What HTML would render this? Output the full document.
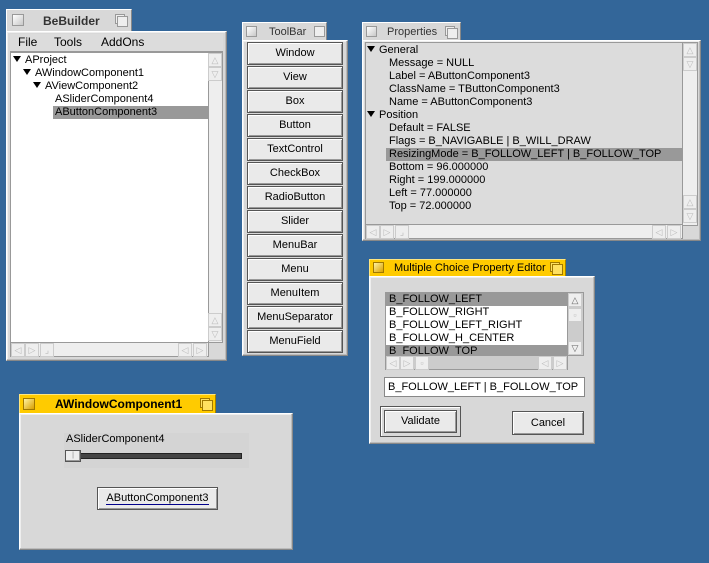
<!DOCTYPE html>
<html><head><meta charset="utf-8"><style>
*{box-sizing:border-box;margin:0;padding:0}
body{width:709px;height:563px;background:#336699;position:relative;overflow:hidden;font-family:"Liberation Sans",sans-serif;font-size:11px;color:#000}
.a{position:absolute}
.tab{position:absolute;background:#d8d8d8;border:1px solid #fff;border-right-color:#888;border-bottom:none;font-size:11px}
.tab.y{background:#ffcb00;border-color:#ffe680 #a08000 #a08000 #ffe680}
.cb{position:absolute;width:12px;height:12px;border:1px solid #999;background:linear-gradient(135deg,#fff,#c8c8c8)}
.y .cb{background:linear-gradient(135deg,#fff2a0,#d9a000);border-color:#a07800}
.zb{position:absolute;width:13px;height:13px}
.zb:before{content:"";position:absolute;left:0;top:0;width:8px;height:8px;border:1px solid #999;background:#eee}
.zb:after{content:"";position:absolute;right:0;bottom:0;width:9px;height:9px;border:1px solid #999;background:#eee}
.y .zb:before,.y .zb:after{border-color:#a07800;background:#ffe060}
.frame{position:absolute;background:#d8d8d8;border:1px solid #fff;border-right-color:#888;border-bottom-color:#888;box-shadow:inset -1px -1px 0 #bbb,inset 1px 1px 0 #eee}
.list{position:absolute;background:#fff;border:1px solid #999}
.row{position:absolute;height:13px;line-height:13px;white-space:nowrap}
.sel{background:#999}
.sb{position:absolute;background:#eee;border:1px solid #999}
.arr{position:absolute;width:14px;height:14px;border:1px solid #ccc;color:#bbb;font-size:9px;text-align:center;line-height:12px;background:#eee}
.btn{position:absolute;background:#eaeaea;border:1px solid #555;box-shadow:inset 1px 1px 0 #fff,inset -1px -1px 0 #999;text-align:center;line-height:20px;font-size:11px}
.tri{display:inline-block;width:0;height:0;border-left:4px solid transparent;border-right:4px solid transparent;border-top:6px solid #000;margin-right:4px;vertical-align:1px}
</style></head><body>

<!-- BeBuilder -->
<div class="tab" style="left:6px;top:9px;width:126px;height:23px">
 <div class="cb" style="left:5px;top:4px"></div>
 <div class="a" style="left:36px;top:4px;font-weight:bold;font-size:12px;color:#333">BeBuilder</div>
 <div class="zb" style="left:108px;top:4px"></div>
</div>
<div class="frame" style="left:6px;top:31px;width:221px;height:330px"></div>
<div class="a" style="left:10px;top:34px;width:213px;height:18px;background:#dcdcdc;border-bottom:1px solid #999;font-size:12px;line-height:17px">
 <span class="a" style="left:8px">File</span><span class="a" style="left:44px">Tools</span><span class="a" style="left:91px">AddOns</span></div>
<div class="list" style="left:10px;top:52px;width:213px;height:291px">
 <div class="row" style="left:2px;top:1px"><span class="tri"></span>AProject</div>
 <div class="row" style="left:12px;top:14px"><span class="tri"></span>AWindowComponent1</div>
 <div class="row" style="left:22px;top:27px"><span class="tri"></span>AViewComponent2</div>
 <div class="row" style="left:44px;top:40px">ASliderComponent4</div>
 <div class="row sel" style="left:42px;top:53px;width:156px;padding-left:2px">AButtonComponent3</div>
</div>
<div class="sb" style="left:208px;top:52px;width:15px;height:291px"></div>
<div class="arr" style="left:208px;top:53px">△</div><div class="arr" style="left:208px;top:67px">▽</div>
<div class="arr" style="left:208px;top:313px">△</div><div class="arr" style="left:208px;top:327px">▽</div>
<div class="sb" style="left:10px;top:342px;width:199px;height:15px"></div>
<div class="arr" style="left:11px;top:343px">◁</div><div class="arr" style="left:25px;top:343px">▷</div><div class="arr" style="left:40px;top:343px">⌟</div>
<div class="arr" style="left:178px;top:343px">◁</div><div class="arr" style="left:193px;top:343px">▷</div>

<!-- ToolBar -->
<div class="tab" style="left:242px;top:22px;width:85px;height:19px">
 <div class="cb" style="left:3px;top:3px;width:11px;height:11px"></div>
 <div class="a" style="left:26px;top:3px;color:#333">ToolBar</div>
 <div class="zb" style="left:71px;top:3px;width:11px;height:11px"></div>
</div>
<div class="frame" style="left:242px;top:40px;width:106px;height:316px"></div>
<div class="btn" style="left:247px;top:42px;width:96px;height:23px">Window</div>
<div class="btn" style="left:247px;top:66px;width:96px;height:23px">View</div>
<div class="btn" style="left:247px;top:90px;width:96px;height:23px">Box</div>
<div class="btn" style="left:247px;top:114px;width:96px;height:23px">Button</div>
<div class="btn" style="left:247px;top:138px;width:96px;height:23px">TextControl</div>
<div class="btn" style="left:247px;top:162px;width:96px;height:23px">CheckBox</div>
<div class="btn" style="left:247px;top:186px;width:96px;height:23px">RadioButton</div>
<div class="btn" style="left:247px;top:210px;width:96px;height:23px">Slider</div>
<div class="btn" style="left:247px;top:234px;width:96px;height:23px">MenuBar</div>
<div class="btn" style="left:247px;top:258px;width:96px;height:23px">Menu</div>
<div class="btn" style="left:247px;top:282px;width:96px;height:23px">MenuItem</div>
<div class="btn" style="left:247px;top:306px;width:96px;height:23px">MenuSeparator</div>
<div class="btn" style="left:247px;top:330px;width:96px;height:23px">MenuField</div>

<!-- Properties -->
<div class="tab" style="left:362px;top:22px;width:99px;height:19px">
 <div class="cb" style="left:3px;top:3px;width:11px;height:11px"></div>
 <div class="a" style="left:24px;top:3px;color:#333">Properties</div>
 <div class="zb" style="left:82px;top:3px"></div>
</div>
<div class="frame" style="left:362px;top:40px;width:339px;height:201px"></div>
<div class="list" style="left:365px;top:42px;width:333px;height:184px;background:#dcdcdc">
 <div class="row" style="left:1px;top:1px"><span class="tri"></span>General</div>
 <div class="row" style="left:23px;top:14px">Message = NULL</div>
 <div class="row" style="left:23px;top:27px">Label = AButtonComponent3</div>
 <div class="row" style="left:23px;top:40px">ClassName = TButtonComponent3</div>
 <div class="row" style="left:23px;top:53px">Name = AButtonComponent3</div>
 <div class="row" style="left:1px;top:66px"><span class="tri"></span>Position</div>
 <div class="row" style="left:23px;top:79px">Default = FALSE</div>
 <div class="row" style="left:23px;top:92px">Flags = B_NAVIGABLE | B_WILL_DRAW</div>
 <div class="row sel" style="left:20px;top:105px;width:297px;padding-left:3px">ResizingMode = B_FOLLOW_LEFT | B_FOLLOW_TOP</div>
 <div class="row" style="left:23px;top:118px">Bottom = 96.000000</div>
 <div class="row" style="left:23px;top:131px">Right = 199.000000</div>
 <div class="row" style="left:23px;top:144px">Left = 77.000000</div>
 <div class="row" style="left:23px;top:157px">Top = 72.000000</div>
</div>
<div class="sb" style="left:682px;top:42px;width:16px;height:184px"></div>
<div class="arr" style="left:683px;top:43px">△</div><div class="arr" style="left:683px;top:57px">▽</div>
<div class="arr" style="left:683px;top:195px">△</div><div class="arr" style="left:683px;top:209px">▽</div>
<div class="sb" style="left:365px;top:224px;width:318px;height:15px"></div>
<div class="arr" style="left:366px;top:225px">◁</div><div class="arr" style="left:380px;top:225px">▷</div><div class="arr" style="left:395px;top:225px">⌟</div>
<div class="arr" style="left:652px;top:225px">◁</div><div class="arr" style="left:667px;top:225px">▷</div>

<!-- Multiple Choice -->
<div class="tab y" style="left:369px;top:259px;width:197px;height:18px">
 <div class="cb" style="left:3px;top:2px;width:11px;height:11px"></div>
 <div class="a" style="left:24px;top:2px">Multiple Choice Property Editor</div>
 <div class="zb" style="left:180px;top:2px"></div>
</div>
<div class="frame" style="left:369px;top:276px;width:226px;height:168px"></div>
<div class="list" style="left:385px;top:292px;width:199px;height:64px">
 <div class="row sel" style="left:0;top:0;width:182px;padding-left:3px">B_FOLLOW_LEFT</div>
 <div class="row" style="left:3px;top:13px">B_FOLLOW_RIGHT</div>
 <div class="row" style="left:3px;top:26px">B_FOLLOW_LEFT_RIGHT</div>
 <div class="row" style="left:3px;top:39px">B_FOLLOW_H_CENTER</div>
 <div class="row sel" style="left:0;top:52px;width:182px;height:10px;overflow:hidden;padding-left:3px">B_FOLLOW_TOP</div>
</div>
<div class="sb" style="left:567px;top:292px;width:17px;height:64px;background:#ccc"></div>
<div class="arr" style="left:568px;top:293px;color:#666;background:#eee">△</div>
<div class="arr" style="left:568px;top:308px;color:#bbb">▫</div>
<div class="arr" style="left:568px;top:341px;color:#666">▽</div>
<div class="sb" style="left:385px;top:355px;width:183px;height:15px;background:#ccc"></div>
<div class="arr" style="left:386px;top:356px">◁</div><div class="arr" style="left:400px;top:356px">▷</div><div class="arr" style="left:415px;top:356px">▫</div>
<div class="arr" style="left:538px;top:356px">◁</div><div class="arr" style="left:553px;top:356px">▷</div>
<div class="a" style="left:384px;top:377px;width:201px;height:20px;background:#fff;border:1px solid #888;padding-left:3px;line-height:18px">B_FOLLOW_LEFT | B_FOLLOW_TOP</div>
<div class="a" style="left:380px;top:406px;width:81px;height:31px;border:1px solid #555;box-shadow:inset 1px 1px 0 #fff"></div>
<div class="btn" style="left:384px;top:410px;width:73px;height:23px">Validate</div>
<div class="btn" style="left:512px;top:411px;width:72px;height:24px;line-height:22px">Cancel</div>

<!-- AWindowComponent1 -->
<div class="tab y" style="left:19px;top:394px;width:197px;height:20px">
 <div class="cb" style="left:3px;top:3px"></div>
 <div class="a" style="left:35px;top:2px;font-weight:bold;font-size:12px">AWindowComponent1</div>
 <div class="zb" style="left:180px;top:3px"></div>
</div>
<div class="frame" style="left:19px;top:413px;width:274px;height:137px"></div>
<div class="a" style="left:64px;top:433px;width:185px;height:35px;background:#d4d4d4"></div>
<div class="a" style="left:66px;top:433px">ASliderComponent4</div>
<div class="a" style="left:66px;top:453px;width:176px;height:6px;background:#444;border:1px solid #222"></div>
<div class="a" style="left:65px;top:450px;width:16px;height:12px;background:#eee;border:1px solid #555;box-shadow:inset -1px -1px 0 #999;font-size:7px;text-align:center;line-height:9px;color:#888">|</div>
<div class="btn" style="left:97px;top:487px;width:121px;height:23px"><span style="border-bottom:1px solid #00008b">AButtonComponent3</span></div>

</body></html>
